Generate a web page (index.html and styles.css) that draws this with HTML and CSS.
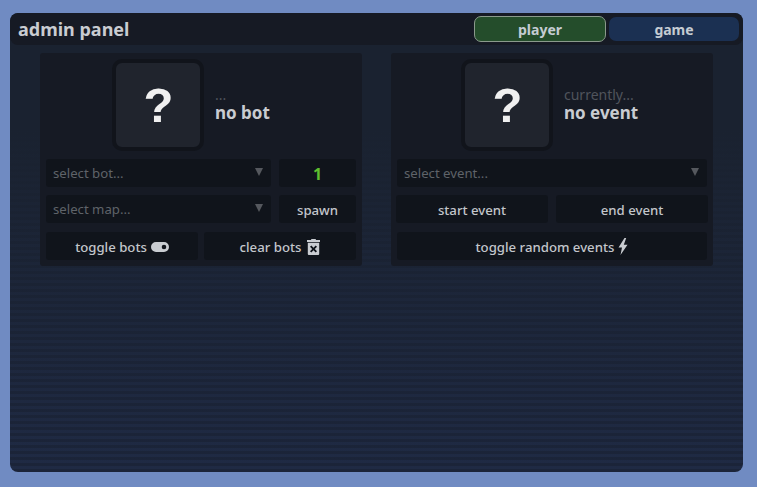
FILE: index.html
```html
<!DOCTYPE html>
<html lang="en">
<head>
    <meta name="viewport" content="width=device-width, initial-scale=1">
    <title>admin panel</title>
    <link rel="stylesheet" href="styles.css">
</head>
<body>
<div class="panel">
    <div class="header">
        <h1>admin panel</h1>
        <div class="tabs">
            <button class="tab tab-player">player</button>
            <button class="tab tab-game">game</button>
        </div>
    </div>

    <div class="columns">
        <!-- bots -->
        <div class="card">
            <div class="preview">
                <div class="avatar">?</div>
                <div class="info info-bot">
                    <span class="info-small">...</span>
                    <span class="info-big">no bot</span>
                </div>
            </div>
            <div class="row">
                <div class="select select-bot">select bot...<span class="arrow"></span></div>
                <div class="btn btn-count">1</div>
            </div>
            <div class="row">
                <div class="select select-bot">select map...<span class="arrow"></span></div>
                <button class="btn btn-spawn">spawn</button>
            </div>
            <div class="row row-gap6">
                <button class="btn btn-half">toggle bots
                    <svg class="icon" width="18" height="10" viewBox="0 0 18 10"><path fill-rule="evenodd" d="M5 0h8a5 5 0 0 1 0 10H5A5 5 0 0 1 5 0zm8 2.700a2.300 2.300 0 1 0 0 4.600 2.300 2.300 0 0 0 0-4.600z"/></svg>
                </button>
                <button class="btn btn-half">clear bots
                    <svg class="icon icon-trash" width="13" height="16" viewBox="0 0 13 16"><path fill-rule="evenodd" d="M4.500 0h4l.7 1H13v2H0V1h3.800zM.8 3.800h11.400V15a1 1 0 0 1-1 1H1.800a1 1 0 0 1-1-1zM4.300 6.500 3 7.800 5.200 10 3 12.200l1.300 1.300 2.200-2.200 2.200 2.200 1.300-1.300L7.800 10 10 7.800 8.700 6.500 6.500 8.700z"/></svg>
                </button>
            </div>
        </div>

        <!-- events -->
        <div class="card">
            <div class="preview">
                <div class="avatar">?</div>
                <div class="info info-event">
                    <span class="info-small">currently...</span>
                    <span class="info-big">no event</span>
                </div>
            </div>
            <div class="row">
                <div class="select select-wide">select event...<span class="arrow"></span></div>
            </div>
            <div class="row row-events">
                <button class="btn btn-half">start event</button>
                <button class="btn btn-half">end event</button>
            </div>
            <div class="row">
                <button class="btn btn-wide">toggle random events
                    <svg class="icon" width="10" height="17" viewBox="0 0 10 17"><path d="M6.500 0 .5 9.500H4L2.500 17 9.500 6.800H5.800L8.200 0z"/></svg>
                </button>
            </div>
        </div>
    </div>
</div>
</body>
</html>
```

FILE: styles.css
```css
* {
    box-sizing: border-box;
}

body {
    margin: 0;
    height: 487px;
    padding: 13px 14px 15px 10px;
    background-color: #708bc2;
    font-family: "Noto Sans", sans-serif;
    overflow: hidden;
}

.panel {
    height: 100%;
    border-radius: 8px;
    overflow: hidden;
    background-color: #1c2536;
    background-image:
        linear-gradient(to bottom, #1a2230 0%, #1a2230 25%, rgba(26, 34, 48, 0) 100%),
        repeating-linear-gradient(to bottom, #1b2439 0, #1b2439 3px, #1f2a44 3px, #1f2a44 6px);
}

.header {
    display: flex;
    justify-content: space-between;
    align-items: center;
    height: 32px;
    padding: 0 4px 0 8px;
    background-color: #161a24;
    border-radius: 8px;
}

h1 {
    margin: 0;
    font-size: 18px;
    font-weight: 700;
    color: #c9ccd1;
}

.tabs {
    display: flex;
    gap: 3px;
    align-items: center;
}

button {
    font-family: inherit;
    border: none;
}

.tab {
    width: 130px;
    height: 24px;
    padding: 0;
    border-radius: 7px;
    font-size: 14px;
    font-weight: 700;
    color: #c5ccd3;
}

.tab-player {
    width: 132px;
    height: 26px;
    background-color: #244d2b;
    border: 1px solid #8a9a8c;
}

.tab-game {
    background-color: #1b3052;
}

.columns {
    display: flex;
    gap: 29px;
    padding: 8px 30px;
}

.card {
    width: 322px;
    height: 213px;
    padding: 6px;
    background-color: #161a24;
    border-radius: 3px;
}

.preview {
    display: flex;
    align-items: center;
    justify-content: center;
    gap: 11px;
    height: 92px;
    margin-bottom: 8px;
}

.avatar {
    display: flex;
    align-items: center;
    justify-content: center;
    width: 92px;
    height: 92px;
    padding: 0 0 0 1px;
    border: 4px solid #11141b;
    border-radius: 10px;
    background-color: #20242d;
    color: #f0f0f0;
    font-family: "Liberation Sans", sans-serif;
    font-size: 49px;
    font-weight: 700;
}

.info {
    display: flex;
    flex-direction: column;
    white-space: nowrap;
}

.info-bot {
    width: 75px;
}

.info-event {
    width: 79px;
}

.info-small {
    font-size: 14px;
    line-height: 15px;
    color: #50545c;
}

.info-big {
    font-size: 17px;
    line-height: 21px;
    font-weight: 700;
    color: #c9ccd1;
}

.row {
    display: flex;
    gap: 8px;
    margin-bottom: 8px;
    height: 28px;
}

.row-gap6 {
    gap: 6px;
    margin-top: 9px;
}

.select, .btn {
    height: 28px;
    background-color: #10141b;
    border-radius: 3px;
    font-size: 13.2px;
}

.select {
    position: relative;
    padding: 0 7px;
    line-height: 28px;
    color: #5f6369;
}

.select-bot {
    width: 225px;
}

.select-wide {
    width: 310px;
}

.arrow {
    position: absolute;
    right: 8px;
    top: 9px;
    border-left: 4px solid transparent;
    border-right: 4px solid transparent;
    border-top: 8px solid #55585e;
}

.btn {
    display: flex;
    align-items: center;
    justify-content: center;
    gap: 4px;
    padding: 1px 0 0;
    font-weight: 500;
    color: #c3c6cb;
}

.btn-count {
    width: 77px;
    font-size: 16px;
    font-weight: 700;
    color: #5fbf2f;
}

.btn-spawn {
    width: 77px;
}

.btn-half {
    width: 152px;
}

.btn-wide {
    width: 310px;
}

.row-events {
    margin: 0 -1px 9px;
    width: 312px;
}

.icon {
    fill: #c9ccd1;
}

.icon-trash {
    margin-left: 2px;
}
```
